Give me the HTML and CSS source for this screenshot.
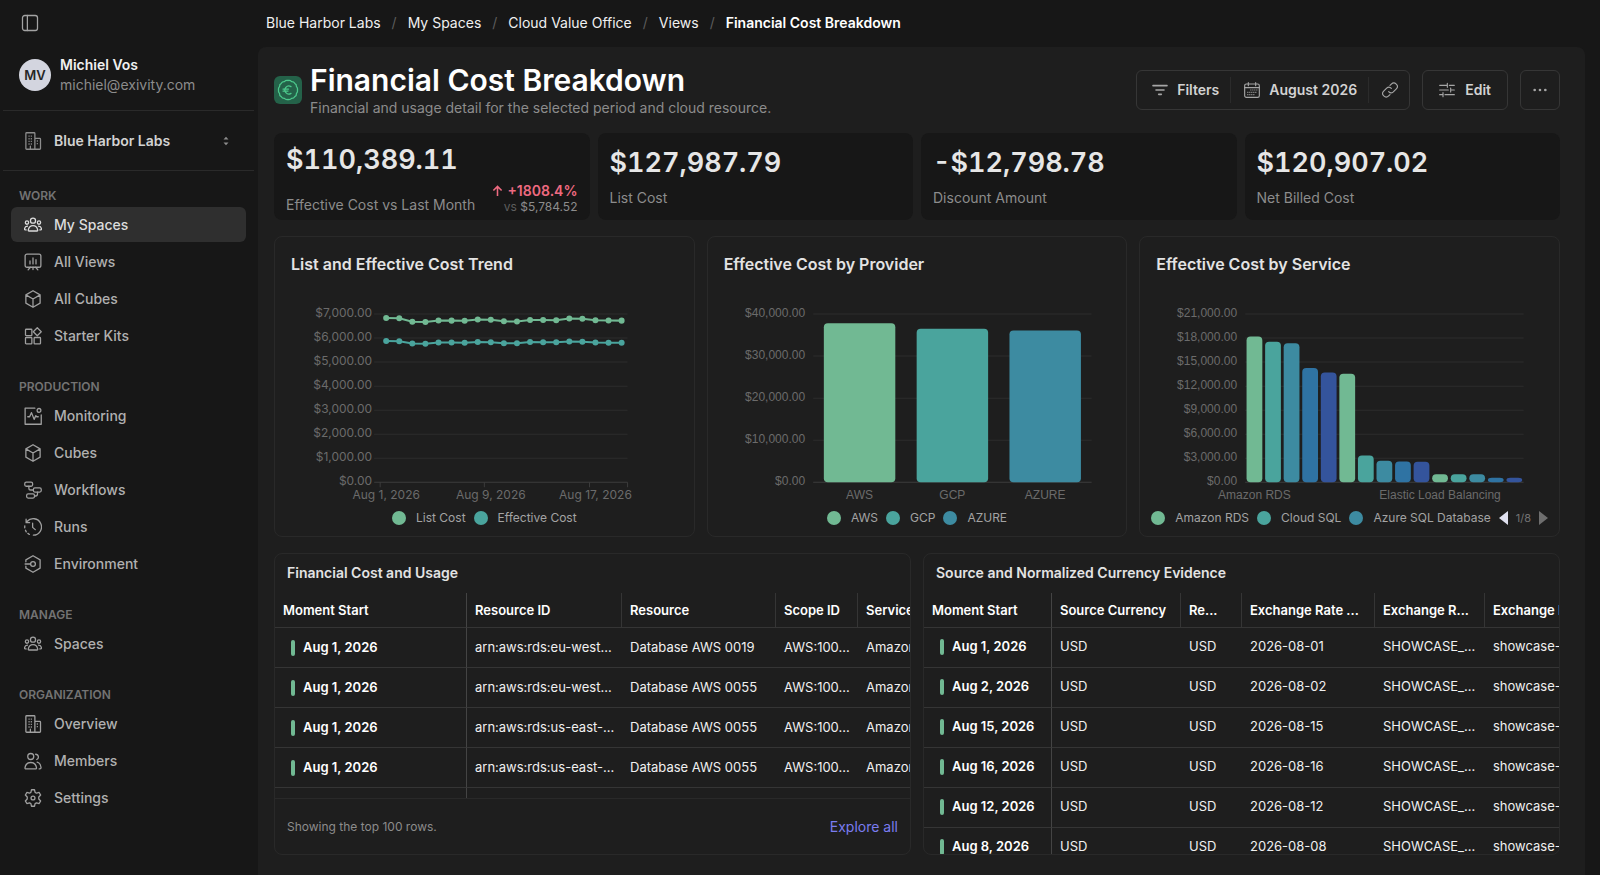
FILE: index.html
```html
<!DOCTYPE html>
<html lang="en">
<head>
<meta charset="utf-8">
<meta name="viewport" content="width=device-width, initial-scale=1">
<title>Financial Cost Breakdown</title>
<link rel="stylesheet" href="styles.css">
</head>
<body>
<svg class="sprite" aria-hidden="true">
  <symbol id="i-people" viewBox="0 0 24 24"><circle cx="12" cy="6.2" r="3.4"/><circle cx="4" cy="8.8" r="2.2"/><circle cx="20" cy="8.8" r="2.2"/><path d="M6.6 20c-.6 0-1-.5-.9-1.1.6-3.4 3-6 6.3-6s5.700 2.600 6.300 6c.1.600-.3 1.100-.9 1.100zM4.600 13.500c-2 .1-3.600 1.600-3.900 3.700-.1.800.3 1.300 1 1.400h1.200M19.400 13.500c2 .1 3.600 1.600 3.900 3.700.1.800-.3 1.300-1 1.400h-1.200"/></symbol>
  <symbol id="i-board" viewBox="0 0 24 24"><rect x="1.5" y="1.500" width="21" height="17.500" rx="2.500"/><path d="M8 10.500v4M12 6.500v8M16 9v5.500M8.500 19l-3 3.500M15.500 19l3 3.500M12 19v3"/></symbol>
  <symbol id="i-cube" viewBox="0 0 24 24"><path d="M12 1l9.500 5.500v11L12 23l-9.500-5.500v-11zM2.500 6.500L12 12l9.500-5.500M12 12v11"/></symbol>
  <symbol id="i-kits" viewBox="0 0 24 24"><rect x="2" y="3" width="8.500" height="8.500" rx="1"/><rect x="2" y="14" width="8.500" height="8.500" rx="1"/><rect x="13.500" y="14" width="8.500" height="8.500" rx="1"/><path d="M17.700 1l5.300 5.300-5.300 5.300-5.300-5.300z"/></symbol>
  <symbol id="i-monitor" viewBox="0 0 24 24"><path d="M14.500 1.500h-13V23h21.500V10.500M5 13h2.500L10 7.500l3.500 9 2.300-5 1 1.500H19"/><circle cx="20" cy="4.500" r="2.500"/></symbol>
  <symbol id="i-flow" viewBox="0 0 24 24"><rect x="1" y="1.500" width="10.500" height="5.500" rx="2"/><rect x="12.500" y="9.300" width="10.500" height="5.500" rx="2"/><rect x="3.500" y="17.200" width="10.500" height="5.500" rx="2"/><path d="M6.500 7v2.500c0 1.500 1 2.500 2.500 2.500h3.500M18 14.800V17c0 1.800-1 3-2.500 3H14"/></symbol>
  <symbol id="i-runs" viewBox="0 0 24 24"><path d="M4 4.700a11 11 0 1 1 8.500 18.200M2.800 1.500v4.700h4.700M11.500 7v5.500l3.500 3M1.100 10.500a10 10 0 0 0-.1 2.500M2 16.300l1 2.200M5.200 20.500l2 1.400"/></symbol>
  <symbol id="i-env" viewBox="0 0 24 24"><path d="M2.500 9V6.500L12 1l9.500 5.500v11L12 23l-9.500-5.500V15M1.500 12h7.300"/><circle cx="12" cy="12" r="3.200"/></symbol>
  <symbol id="i-building" viewBox="0 0 24 24"><path d="M2.500 22V2c0-.6.400-1 1-1h10c.6 0 1 .4 1 1v21M14.500 8.500H21c.6 0 1 .4 1 1V22c0 .6-.4 1-1 1H3.500c-.6 0-1-.4-1-1M8.500 22.500V19"/><path class="dots" d="M6 5.500h6M6 9h6M6 12.500h6M6 16h6M17 12h3M17 15.500h3"/></symbol>
  <symbol id="i-members" viewBox="0 0 24 24"><circle cx="9" cy="6" r="4"/><path d="M2.500 22.500c-.8 0-1.300-.6-1.200-1.300.6-4.300 3.700-7.200 7.700-7.200s7.100 2.900 7.700 7.200c.1.700-.4 1.300-1.200 1.300zM15.500 3c4 0 5 5.500 1.500 7M17.500 13.500c2.900.8 4.800 3.500 5.200 7 .1 1.200-.5 2-1.500 2h-1"/></symbol>
  <symbol id="i-gear" viewBox="0 0 24 24"><circle cx="12" cy="12" r="2.600"/><path d="M10 1h4l.8 3.500 1.900 1.100 3.500-1 2 3.500-2.500 2.500v2.800l2.500 2.500-2 3.500-3.500-1-1.900 1.100L14 23h-4l-.8-3.500-1.900-1.100-3.500 1-2-3.500 2.500-2.500v-2.800L1.800 8.100l2-3.500 3.500 1 1.900-1.100z"/></symbol>
</svg>

<div class="app">
  <aside class="sidebar">
    <button class="toggle" type="button" aria-label="Toggle sidebar">
      <svg class="icon" viewBox="0 0 24 24"><rect x="2" y="2" width="20" height="20" rx="3"/><path d="M8.500 2v20"/></svg>
    </button>
    <div class="user">
      <span class="avatar">MV</span>
      <div class="user-text">
        <strong>Michiel Vos</strong>
        <span>michiel@exivity.com</span>
      </div>
    </div>
    <button class="org" type="button">
      <svg class="icon"><use href="#i-building"/></svg>
      <span>Blue Harbor Labs</span>
      <svg class="updown" viewBox="0 0 6 10"><path d="M0.500 3.500L3 0.800l2.500 2.700zM0.500 6.500L3 9.200l2.500-2.700z"/></svg>
    </button>
    <nav class="nav" aria-label="Main">
      <section>
        <h2>WORK</h2>
        <a class="active" href="#my-spaces"><svg class="icon"><use href="#i-people"/></svg>My Spaces</a>
        <a href="#views"><svg class="icon"><use href="#i-board"/></svg>All Views</a>
        <a href="#all-cubes"><svg class="icon"><use href="#i-cube"/></svg>All Cubes</a>
        <a href="#kits"><svg class="icon"><use href="#i-kits"/></svg>Starter Kits</a>
      </section>
      <section>
        <h2>PRODUCTION</h2>
        <a href="#monitoring"><svg class="icon"><use href="#i-monitor"/></svg>Monitoring</a>
        <a href="#cubes"><svg class="icon"><use href="#i-cube"/></svg>Cubes</a>
        <a href="#workflows"><svg class="icon"><use href="#i-flow"/></svg>Workflows</a>
        <a href="#runs"><svg class="icon"><use href="#i-runs"/></svg>Runs</a>
        <a href="#environment"><svg class="icon"><use href="#i-env"/></svg>Environment</a>
      </section>
      <section>
        <h2>MANAGE</h2>
        <a href="#spaces"><svg class="icon"><use href="#i-people"/></svg>Spaces</a>
      </section>
      <section>
        <h2>ORGANIZATION</h2>
        <a href="#overview"><svg class="icon"><use href="#i-building"/></svg>Overview</a>
        <a href="#members"><svg class="icon"><use href="#i-members"/></svg>Members</a>
        <a href="#settings"><svg class="icon"><use href="#i-gear"/></svg>Settings</a>
      </section>
    </nav>
  </aside>

  <div class="main">
    <nav class="crumbs" aria-label="Breadcrumb">
      <a href="#org">Blue Harbor Labs</a><i>/</i>
      <a href="#my-spaces">My Spaces</a><i>/</i>
      <a href="#office">Cloud Value Office</a><i>/</i>
      <a href="#views">Views</a><i>/</i>
      <a class="current" href="#view" aria-current="page">Financial Cost Breakdown</a>
    </nav>

    <main class="panel">
      <header class="head">
        <span class="badge">
          <svg viewBox="0 0 28 28"><path d="M14 4.500Q16.200 4 17.600 5.600Q19.800 5.500 20.700 7.300Q22.700 8.200 22.400 10.400Q23.900 12 23.500 14Q23.900 16 22.400 17.600Q22.700 19.800 20.700 20.700Q19.800 22.500 17.600 22.400Q16.200 24 14 23.500Q11.800 24 10.400 22.400Q8.200 22.500 7.300 20.700Q5.300 19.800 5.600 17.600Q4.100 16 4.500 14Q4.100 12 5.600 10.400Q5.300 8.200 7.300 7.300Q8.200 5.500 10.400 5.600Q11.800 4 14 4.500Z"/><path d="M17 10.600a4 4 0 1 0 0 6.800M9 13.100h5.500M9 15.100h5"/></svg>
        </span>
        <div class="head-text">
          <h1>Financial Cost Breakdown</h1>
          <p>Financial and usage detail for the selected period and cloud resource.</p>
        </div>
        <div class="actions">
          <div class="group">
            <button type="button"><svg class="icon" viewBox="0 0 24 24"><path class="thick" d="M1.500 5.500h21M6 12h12M10 18.500h4"/></svg>Filters</button>
            <button type="button"><svg class="icon" viewBox="0 0 24 24"><rect x="1" y="3" width="22" height="20" rx="2.500"/><path d="M1 8.500h22M6.500 1v4.500M17.500 1v4.500"/><path class="dots" d="M9.500 12H20M5 15.500h15M5 19h12"/></svg>August 2026</button>
            <button type="button" aria-label="Copy link"><svg class="icon" viewBox="0 0 24 24"><path d="M10 14.500a5 5 0 0 0 7 .4l4.500-4.500a5 5 0 0 0-7.500-7.200l-2 2M14 9.500a5 5 0 0 0-7-.4l-4.500 4.500a5 5 0 0 0 7.500 7.200l2-2"/></svg></button>
          </div>
          <button class="btn" type="button"><svg class="icon" viewBox="0 0 24 24"><path d="M1 5h11M15.500 5H23M1 12h13M18 12h5M1 19h4M9 19h14M12.500 2v6M17.500 9v6M6 16v6"/></svg>Edit</button>
          <button class="btn more" type="button" aria-label="More"><svg class="icon" viewBox="0 0 24 24"><path class="solid" d="M2 12a2 2 0 1 0 4 0a2 2 0 1 0-4 0M10 12a2 2 0 1 0 4 0a2 2 0 1 0-4 0M18 12a2 2 0 1 0 4 0a2 2 0 1 0-4 0"/></svg></button>
        </div>
      </header>

      <section class="kpis">
        <article class="kpi compare">
          <strong>$110,389.11</strong>
          <div class="kpi-foot">
            <span>Effective Cost vs Last Month</span>
            <div class="delta">
              <b><svg class="arrow" viewBox="0 0 12 12"><path d="M6 11.500V1M1.500 5.500L6 1l4.500 4.500"/></svg>+1808.4%</b>
              <small><em>vs</em> $5,784.52</small>
            </div>
          </div>
        </article>
        <article class="kpi"><strong>$127,987.79</strong><span>List Cost</span></article>
        <article class="kpi"><strong>-$12,798.78</strong><span>Discount Amount</span></article>
        <article class="kpi"><strong>$120,907.02</strong><span>Net Billed Cost</span></article>
      </section>

      <section class="charts">
        <article class="card chart">
          <h2>List and Effective Cost Trend</h2>
          <svg class="plot" id="trend" viewBox="0 0 418 200" role="img" aria-label="List and Effective Cost Trend"></svg>
          <div class="legend"><span class="c1">List Cost</span><span class="c2">Effective Cost</span></div>
        </article>
        <article class="card chart">
          <h2>Effective Cost by Provider</h2>
          <svg class="plot alt" id="provider" viewBox="0 0 418 200" role="img" aria-label="Effective Cost by Provider"></svg>
          <div class="legend"><span class="c1">AWS</span><span class="c2">GCP</span><span class="c3">AZURE</span></div>
        </article>
        <article class="card chart">
          <h2>Effective Cost by Service</h2>
          <svg class="plot alt" id="service" viewBox="0 0 418 200" role="img" aria-label="Effective Cost by Service"></svg>
          <div class="legend"><span class="c1">Amazon RDS</span><span class="c2">Cloud SQL</span><span class="c3">Azure SQL Database</span>
            <div class="pager">
              <button type="button" aria-label="Previous"><svg viewBox="0 0 9 14"><path d="M9 0v14L0 7z"/></svg></button>
              <small>1/8</small>
              <button class="next" type="button" aria-label="Next"><svg viewBox="0 0 9 14"><path d="M0 0v14l9-7z"/></svg></button>
            </div>
          </div>
        </article>
      </section>

      <section class="tables">
        <article class="card grid-card">
          <h2>Financial Cost and Usage</h2>
          <div class="scroller">
            <table class="usage">
              <colgroup><col class="w-a"><col class="w-b"><col class="w-b2"><col class="w-c"><col class="w-d"></colgroup>
              <thead><tr><th>Moment Start</th><th>Resource ID</th><th>Resource</th><th>Scope ID</th><th>Service</th></tr></thead>
              <tbody>
                <tr><th>Aug 1, 2026</th><td>arn:aws:rds:eu-west...</td><td>Database AWS 0019</td><td>AWS:100...</td><td>Amazon</td></tr>
                <tr><th>Aug 1, 2026</th><td>arn:aws:rds:eu-west...</td><td>Database AWS 0055</td><td>AWS:100...</td><td>Amazon</td></tr>
                <tr><th>Aug 1, 2026</th><td>arn:aws:rds:us-east-...</td><td>Database AWS 0055</td><td>AWS:100...</td><td>Amazon</td></tr>
                <tr><th>Aug 1, 2026</th><td>arn:aws:rds:us-east-...</td><td>Database AWS 0055</td><td>AWS:100...</td><td>Amazon</td></tr>
                <tr><td></td><td></td><td></td><td></td><td></td></tr>
              </tbody>
            </table>
          </div>
          <footer><span>Showing the top 100 rows.</span><a href="#explore">Explore all</a></footer>
        </article>
        <article class="card grid-card">
          <h2>Source and Normalized Currency Evidence</h2>
          <div class="scroller">
            <table class="currency">
              <colgroup><col class="w-e"><col class="w-f"><col class="w-g"><col class="w-h"><col class="w-i"><col class="w-d"></colgroup>
              <thead><tr><th>Moment Start</th><th>Source Currency</th><th>Re...</th><th>Exchange Rate ...</th><th>Exchange R...</th><th>Exchange ID</th></tr></thead>
              <tbody>
                <tr><th>Aug 1, 2026</th><td>USD</td><td>USD</td><td>2026-08-01</td><td>SHOWCASE_...</td><td>showcase-</td></tr>
                <tr><th>Aug 2, 2026</th><td>USD</td><td>USD</td><td>2026-08-02</td><td>SHOWCASE_...</td><td>showcase-</td></tr>
                <tr><th>Aug 15, 2026</th><td>USD</td><td>USD</td><td>2026-08-15</td><td>SHOWCASE_...</td><td>showcase-</td></tr>
                <tr><th>Aug 16, 2026</th><td>USD</td><td>USD</td><td>2026-08-16</td><td>SHOWCASE_...</td><td>showcase-</td></tr>
                <tr><th>Aug 12, 2026</th><td>USD</td><td>USD</td><td>2026-08-12</td><td>SHOWCASE_...</td><td>showcase-</td></tr>
                <tr><th>Aug 8, 2026</th><td>USD</td><td>USD</td><td>2026-08-08</td><td>SHOWCASE_...</td><td>showcase-</td></tr>
              </tbody>
            </table>
          </div>
        </article>
      </section>
    </main>
  </div>
</div>
<script src="charts.js"></script>
</body>
</html>
```

FILE: styles.css
```css
:root {
  --bg: #171717;
  --panel: #1e1e1e;
  --line: #292929;
  --rule: #353535;
  --muted: #8c8c8c;
  --c1: #71b993;
  --c2: #4aa49d;
  --c3: #3d8ba1;
  --c4: #2f73a3;
  --c5: #34549c;
}

* { box-sizing: border-box; }

body {
  margin: 0;
  background: var(--bg);
  color: #f0f0f0;
  font: 14px/20px Inter, "Liberation Sans", sans-serif;
}

h1, h2, p { margin: 0; }
a { color: inherit; text-decoration: none; }
button {
  margin: 0;
  padding: 0;
  border: 0;
  background: none;
  color: inherit;
  font: inherit;
}

.sprite { position: absolute; width: 0; height: 0; }

.icon {
  flex: none;
  width: 18px;
  height: 18px;
  fill: none;
  stroke: currentColor;
  stroke-width: 1.7;
  stroke-linecap: round;
  stroke-linejoin: round;
}
.icon .thick { stroke-width: 2.4; }
.icon .solid { fill: currentColor; stroke: none; }
.dots { stroke-dasharray: 1.5 1.5; stroke-linecap: butt; }

.app { display: flex; height: 100vh; overflow: hidden; }

/* Sidebar */
.sidebar {
  flex: none;
  display: flex;
  flex-direction: column;
  width: 258px;
  padding: 14px 4px 0 3px;
}
.toggle {
  display: flex;
  align-self: flex-start;
  margin-left: 18px;
  color: #a3a3a3;
}
.user {
  display: flex;
  align-items: center;
  gap: 9px;
  padding: 23px 16px 15px;
  border-bottom: 1px solid #2a2a2a;
}
.avatar {
  display: grid;
  place-items: center;
  width: 32px;
  height: 32px;
  border-radius: 50%;
  background: #d3d5df;
  color: #262626;
  font-size: 13px;
  font-weight: 600;
}
.user-text { display: grid; color: var(--muted); }
.user-text strong { color: #f0f0f0; font-weight: 600; }
.org {
  display: flex;
  align-items: center;
  gap: 12px;
  padding: 20px 25px 19px 21px;
  border-bottom: 1px solid #2a2a2a;
  color: #d2d2d2;
  font-weight: 600;
}
.org .icon { color: #8c8c8c; }
.updown { width: 6px; height: 10px; margin-left: auto; fill: #8c8c8c; }

.nav { padding: 16px 8px 0; }
.nav section {
  display: grid;
  gap: 2px;
  margin-bottom: 25px;
}
.nav h2 {
  padding: 0 8px;
  color: #737373;
  font-size: 12px;
  line-height: 18px;
  font-weight: 600;
}
.nav a {
  display: flex;
  align-items: center;
  gap: 12px;
  height: 35px;
  padding: 0 13px;
  border-radius: 6px;
  color: #b0b0b0;
  font-weight: 500;
}
.nav .icon { color: #a0a0a0; }
.nav .active, .nav .active .icon { color: #dcdcdc; }
.nav .active { background: #2f2f2f; }

/* Main column */
.main {
  flex: 1;
  min-width: 0;
  display: flex;
  flex-direction: column;
  padding-right: 15px;
}
.crumbs {
  display: flex;
  gap: 11px;
  padding: 13px 8px 14px;
}
.crumbs i { color: #5c5c5c; font-style: normal; }
.crumbs .current { font-weight: 600; color: #fff; }

.panel {
  flex: 1;
  min-height: 0;
  display: flex;
  flex-direction: column;
  gap: 16px;
  padding: 15px 25px 20px 16px;
  border-radius: 8px 8px 0 0;
  background: var(--panel);
}

.head { display: flex; align-items: center; gap: 8px; height: 55px; }
.badge {
  flex: none;
  width: 28px;
  height: 28px;
  border-radius: 6px;
  background: #246249;
}
.badge svg {
  display: block;
  fill: none;
  stroke: #4cc98c;
  stroke-width: 1.3;
  stroke-linecap: round;
}
.head-text { flex: 1; min-width: 0; }
h1 { color: #fff; font-size: 30px; line-height: 34px; font-weight: 600; }
.head-text p { margin-top: 2px; color: var(--muted); line-height: 18px; }
.actions { display: flex; gap: 12px; color: #d2d2d2; }
.actions .icon { width: 16px; height: 16px; color: #a6a6a6; }
.group, .btn {
  display: flex;
  align-items: center;
  height: 40px;
  border: 1px solid #363636;
  border-radius: 6px;
  font-weight: 600;
}
.group button {
  display: flex;
  align-items: center;
  gap: 9px;
  height: 26px;
  padding: 0 11px 0 13px;
  font-weight: 600;
}
.group { padding-left: 2px; }
.group button + button { border-left: 1px solid #2b2b2b; }
.btn { gap: 10px; padding: 0 16px; }
.btn.more { padding: 0 11px; }

/* Key figures */
.kpis { display: grid; grid-template-columns: repeat(4, 1fr); gap: 8px; }
.kpi {
  display: flex;
  flex-direction: column;
  justify-content: space-between;
  height: 87px;
  padding: 13px 12px 12px;
  border-radius: 8px;
  background: var(--bg);
  color: var(--muted);
}
.kpi strong {
  color: #e6e6e6;
  font-size: 27px;
  line-height: 34px;
  font-weight: 600;
  font-variant-numeric: tabular-nums;
}
.kpi.compare { padding: 10px 12px 5px; }
.kpi-foot { display: flex; justify-content: space-between; align-items: flex-end; }
.delta { display: grid; justify-items: end; }
.delta b { display: flex; align-items: center; gap: 4px; color: #ee6a80; font-weight: 600; line-height: 16px; }
.delta small { font-size: 12px; line-height: 16px; }
.delta em { color: #5e5e5e; font-style: normal; }
.arrow { width: 11px; height: 12px; fill: none; stroke: currentColor; stroke-width: 1.7; }

/* Cards */
.card {
  min-width: 0;
  overflow: hidden;
  border: 1px solid var(--line);
  border-radius: 8px;
}
.card h2 { color: #e3e3e3; font-weight: 600; }

.charts { display: grid; grid-template-columns: repeat(3, 1fr); gap: 12px; }
.chart h2 { padding: 17px 16px 0; font-size: 16px; line-height: 20px; }
.plot { display: block; width: 100%; margin-top: 30px; }
.plot text { fill: #6b6b6b; font-size: 12px; }
.plot.alt text { font-family: "Liberation Sans", sans-serif; }
.plot .end { text-anchor: end; }
.plot .mid { text-anchor: middle; }
.plot .grid { stroke: #2d2d2d; }
.plot .axis { stroke: #3c3c3c; }
.plot polyline { fill: none; stroke-width: 2; }
.fill1 { fill: var(--c1); }
.fill2 { fill: var(--c2); }
.fill3 { fill: var(--c3); }
.fill4 { fill: var(--c4); }
.fill5 { fill: var(--c5); }
.stroke1 { stroke: var(--c1); }
.stroke2 { stroke: var(--c2); }

.legend {
  display: flex;
  justify-content: center;
  gap: 8px;
  padding: 5px 11px 9px;
  color: #a3a3a3;
  font-size: 12px;
  line-height: 18px;
  white-space: nowrap;
}
.legend span { display: flex; align-items: center; gap: 10px; }
.legend span::before { content: ""; width: 14px; height: 14px; border-radius: 50%; background: var(--c1); }
.legend .c2::before { background: var(--c2); }
.legend .c3::before { background: var(--c3); }
.pager { display: flex; align-items: center; gap: 8px; }
.pager small { color: #737373; font-size: 11px; }
.pager svg { display: block; width: 9px; height: 14px; fill: #dfe0ef; }
.pager .next svg { fill: #6e6e6e; }

/* Tables */
.tables {
  flex: 1;
  min-height: 0;
  display: grid;
  grid-template-columns: repeat(2, 1fr);
  gap: 12px;
}
.grid-card { display: flex; flex-direction: column; min-height: 0; }
.grid-card h2 { padding: 9px 12px 10px; font-size: 14px; line-height: 20px; }
.scroller { flex: 1; min-height: 0; overflow: hidden; }
table { border-collapse: separate; border-spacing: 0; table-layout: fixed; }
.usage { width: 683px; }
.currency { width: 661px; }
.w-a { width: 192px; }
.w-b { width: 155px; }
.w-b2 { width: 154px; }
.w-c { width: 82px; }
.w-d { width: 100px; }
.w-e { width: 128px; }
.w-f { width: 129px; }
.w-g { width: 61px; }
.w-h { width: 133px; }
.w-i { width: 110px; }
th, td {
  height: 40px;
  padding: 0 4px 2px 8px;
  overflow: hidden;
  border-bottom: 1px solid var(--rule);
  font-size: 13px;
  font-weight: 400;
  text-align: left;
  white-space: nowrap;
}
.currency tbody th, .currency tbody td { padding-bottom: 4px; }
th { color: #fff; font-weight: 600; }
thead th { height: 35px; padding-bottom: 0; border-right: 1px solid var(--rule); }
tr > :first-child { border-right: 1px solid #444; }
tbody th { padding-left: 16px; }
tbody th::before {
  content: "";
  display: inline-block;
  width: 4px;
  height: 16px;
  margin-right: 8px;
  border-radius: 2px;
  background: var(--c1);
  vertical-align: middle;
}
.grid-card footer {
  display: flex;
  align-items: center;
  justify-content: space-between;
  height: 56px;
  padding: 0 12px;
  border-top: 1px solid var(--line);
  color: var(--muted);
  font-size: 12px;
}
.grid-card footer a { color: #7a7cf0; font-size: 14px; }
```

FILE: charts.js
```js
const NS = "http://www.w3.org/2000/svg";
const TOP = 10;
const BASE = 178;

function add(svg, tag, attrs, text) {
  const el = document.createElementNS(NS, tag);
  for (const key in attrs) el.setAttribute(key, attrs[key]);
  if (text) el.textContent = text;
  svg.append(el);
}

function money(n) {
  return "$" + n.toLocaleString("en-US", { minimumFractionDigits: 2 });
}

function scale(value, max) {
  return BASE - (BASE - TOP) * value / max;
}

function axes(svg, max, steps, left, right, labelX) {
  for (let i = 0; i <= steps; i++) {
    const y = scale(i, steps);
    add(svg, "line", { class: i ? "grid" : "axis", x1: left, x2: right, y1: y, y2: y });
    add(svg, "text", { class: "end", x: labelX, y: y + 3 }, money(max * i / steps));
  }
}

function trend() {
  const svg = document.getElementById("trend");
  const step = 13.06;
  axes(svg, 7000, 7, 99, 352, 97);
  [105, 209, 314, 352].forEach(x => add(svg, "line", { class: "axis", x1: x, x2: x, y1: BASE, y2: BASE + 5 }));
  [["Aug 1, 2026", 0], ["Aug 9, 2026", 8], ["Aug 17, 2026", 16]].forEach(([label, i]) =>
    add(svg, "text", { class: "mid", x: 111 + i * step, y: 195 }, label));
  const series = [
    [6830, 6820, 6680, 6670, 6730, 6725, 6715, 6775, 6765, 6695, 6690, 6755, 6750, 6745, 6810, 6800, 6745, 6735, 6725],
    [5880, 5870, 5775, 5765, 5820, 5815, 5805, 5835, 5825, 5785, 5780, 5835, 5830, 5825, 5855, 5845, 5815, 5805, 5800]
  ];
  series.forEach((values, s) => {
    const points = values.map((v, i) => [111 + i * step, scale(v, 7000)]);
    add(svg, "polyline", { class: "stroke" + (s + 1), points: points.join(" ") });
    points.forEach(([x, y]) => add(svg, "circle", { class: "fill" + (s + 1), cx: x, cy: y, r: 3 }));
  });
}

function bars(id, max, steps, values, ratio, labels) {
  const svg = document.getElementById(id);
  const left = 105, right = 383;
  const band = (right - left) / values.length;
  axes(svg, max, steps, left, right, 97);
  values.forEach((v, i) => {
    const y = scale(v, max);
    add(svg, "rect", {
      class: "fill" + (i % 5 + 1), rx: 4,
      x: left + band * (i + (1 - ratio) / 2), y, width: band * ratio, height: BASE - y
    });
  });
  labels.forEach(([label, i]) =>
    add(svg, "text", { class: "mid", x: left + band * (i + 0.5), y: 195 }, label));
}

trend();
bars("provider", 40000, 4, [37800, 36500, 36100], 0.77, [["AWS", 0], ["GCP", 1], ["AZURE", 2]]);
bars("service", 21000, 7,
  [18200, 17550, 17350, 14250, 13700, 13550, 3350, 2700, 2600, 2550, 1000, 1000, 1000, 550, 550],
  0.85, [["Amazon RDS", 0], ["Elastic Load Balancing", 10]]);
```
